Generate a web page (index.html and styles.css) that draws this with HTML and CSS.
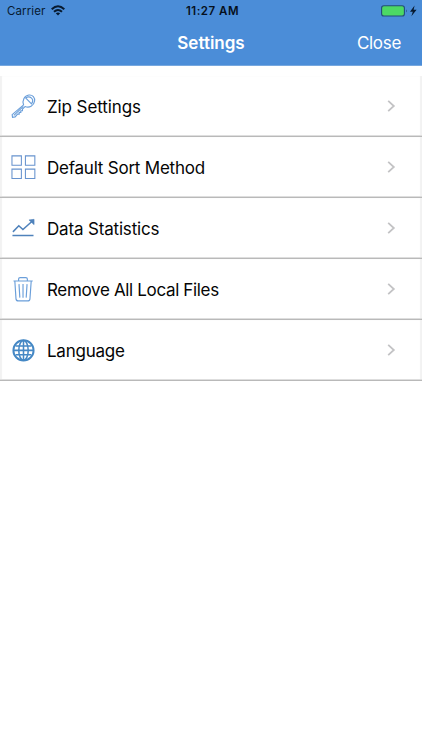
FILE: index.html
```
<!DOCTYPE html>
<html lang="en">
<head>
<meta charset="utf-8">
<title>Settings</title>
<link rel="stylesheet" href="styles.css">
</head>
<body>
<header class="header">
  <div class="status">
    <div class="carrier"><span>Carrier</span>
      <svg class="wifi" width="14" height="11" viewBox="0 0 14 11" fill="none" stroke="#071a30" stroke-width="2"><path d="M.7 4.2Q7-1.6 13.3 4.2M3 6.8Q7 3.2 11 6.8"/><path d="M4.8 8.2Q7 6.7 9.2 8.2L7 10.5Z" fill="#071a30" stroke="none"/></svg>
    </div>
    <time class="clock">11:27 AM</time>
    <svg class="battery" width="37" height="12" viewBox="0 0 37 12"><rect x=".6" y=".8" width="22.8" height="10.2" rx="2.3" fill="#4cd964" stroke="#234d79" stroke-width="1.1"/><path d="M25 4.2Q26.7 5.9 25 7.6Z" fill="#234d79"/><path d="M33.6 .6 29 6.7H31.8L30.4 11.2 35.6 4.8H32.6Z" fill="#071a30"/></svg>
  </div>
  <div class="nav"><h1 class="title">Settings</h1><span class="close">Close</span></div>
</header>
<main class="list">
  <div class="row">
    <svg class="icon" viewBox="0 0 26 26" fill="none" stroke="#6b9fda" stroke-width="1.2"><path d="M13.1 11.8C11.4 7.2 13.9 2.2 18.6 1.6C22.7 1.2 25 4.4 24.5 8C23.8 12.8 19 15.4 14.6 13.6L11.9 16.2V17.9H10.2V19.6H8.5V21.4H6.8L4.3 24.3L1.6 24.8L1.2 22Z"/><path d="M3 22.8 12.8 13.4M15.2 4.6 21.3 10.8Q23.8 7.2 21.4 4.8Q18.5 2.3 15.2 4.6Z"/></svg>
    <span class="label zip">Zip Settings</span>
    <svg class="chevron" viewBox="0 0 9 14"><path d="M1.2 1.9 6.8 7 1.2 12.1"/></svg>
  </div>
  <div class="row">
    <svg class="icon" viewBox="0 0 26 26" fill="none" stroke="#6793ce" stroke-width="1.1"><path d="M1 1.4H10.8V11.2H1ZM15 1.4H24.8V11.2H15ZM1 15.2H10.8V25H1ZM15 15.2H24.8V25H15Z"/></svg>
    <span class="label sort">Default Sort Method</span>
    <svg class="chevron" viewBox="0 0 9 14"><path d="M1.2 1.9 6.8 7 1.2 12.1"/></svg>
  </div>
  <div class="row">
    <svg class="icon" viewBox="0 0 26 26" fill="none" stroke="#4f82bb" stroke-width="1.6"><path d="M2 17 8.1 10.7 12.4 14.6 21.7 6.2M1.5 20.8H23.4"/><path d="M18.7 4.6 24 4V9.5Z" fill="#4f82bb" stroke-width=".6"/></svg>
    <span class="label stats">Data Statistics</span>
    <svg class="chevron" viewBox="0 0 9 14"><path d="M1.2 1.9 6.8 7 1.2 12.1"/></svg>
  </div>
  <div class="row">
    <svg class="icon" viewBox="0 0 26 26" fill="none" stroke="#6b9fda" stroke-width="1.2"><path d="M2.6 4.7H22.6M7.9 4.5V2.7Q7.9 1.1 9.5 1.1H15.4Q17 1.1 17 2.7V4.5M4 5 5.2 23.3Q5.3 25.4 7.7 25.4H17.2Q19.6 25.4 19.7 23.3L21 5M8.3 7.9 9.2 22M12.5 7.9V22M16.7 7.9 15.8 22"/></svg>
    <span class="label remove">Remove All Local Files</span>
    <svg class="chevron" viewBox="0 0 9 14"><path d="M1.2 1.9 6.8 7 1.2 12.1"/></svg>
  </div>
  <div class="row">
    <svg class="icon" viewBox="0 0 26 26" fill="none" stroke="#4588c5" stroke-width="1.6"><circle cx="13" cy="13.4" r="10.5" stroke-width="2"/><ellipse cx="13" cy="13.4" rx="4.9" ry="10.3"/><path d="M13 3V23.8M2.5 13.4H23.5M4.8 8.8H21.2M4.8 18H21.2"/></svg>
    <span class="label lang">Language</span>
    <svg class="chevron" viewBox="0 0 9 14"><path d="M1.2 1.9 6.8 7 1.2 12.1"/></svg>
  </div>
</main>
</body>
</html>
```
FILE: styles.css
```
* { box-sizing: border-box; }
body { margin: 0; height: 750px; background: #fff; color: #050505; font-family: Inter, "Liberation Sans", sans-serif; overflow: hidden; }
.header { height: 66px; background: #4b8dd8; border-bottom: 1px solid #77a8df; }
.status { display: grid; grid-template-columns: 1fr auto 1fr; align-items: center; height: 22px; padding: 0 4px 0 7px; color: #071a30; }
.carrier { display: flex; align-items: center; gap: 6px; font-size: 11.5px; letter-spacing: .1px; }
.wifi { margin-top: -1px; }
.clock { color: #06101d; font-size: 11.5px; font-weight: 600; letter-spacing: .5px; }
.battery { justify-self: end; margin-top: -1px; }
.nav { display: grid; grid-template-columns: 1fr auto 1fr; align-items: center; height: 42px; padding: 0 21px; color: #fff; }
.title { grid-column: 2; margin: 0; font-size: 17px; font-weight: 600; line-height: 24px; letter-spacing: 0; }
.close { justify-self: end; font-size: 17px; letter-spacing: -.3px; }
.list { padding-top: 10px; }
.row { display: flex; align-items: center; height: 61px; padding: 0 26px 0 11px; border-bottom: 1px solid #b9b9b9; box-shadow: inset 0 -1px 0 #dedede, inset 2px 0 1px #f2f2f2, inset -2px 0 1px #f2f2f2; }
.icon { width: 25px; height: 26px; margin-right: 11px; }
.label { padding-top: 2px; font-size: 17px; line-height: 24px; letter-spacing: -.25px; }
.zip { letter-spacing: -.1px; }
.sort { letter-spacing: -.22px; }
.stats { letter-spacing: -.17px; }
.remove { letter-spacing: -.34px; }
.chevron { width: 9px; height: 14px; margin-left: auto; fill: none; stroke: #c3c3c5; stroke-width: 1.8; }
```
